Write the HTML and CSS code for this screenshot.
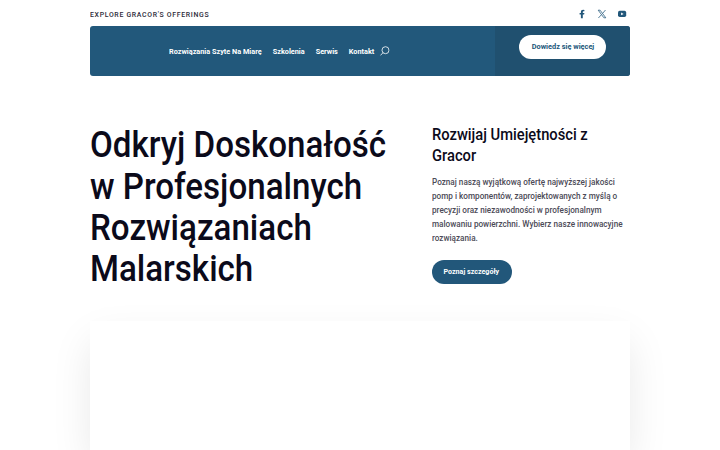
FILE: index.html
```
<!DOCTYPE html>
<html lang="pl">
<head>
<meta charset="utf-8">
<title>Gracor</title>
<link rel="stylesheet" href="styles.css">
</head>
<body>
<div class="page">
  <div class="topbar">
    <p class="tagline">EXPLORE GRACOR'S OFFERINGS</p>
    <div class="social">
      <svg viewBox="0 0 10 10"><path d="M3.9 9.2V5.6H2.6V4h1.3V3C3.9 1.5 4.8.8 6.1.8l1.3.1v1.4h-.8c-.6 0-.8.3-.8.8V4h1.6L7.1 5.6H5.8v3.6z" fill="#22577a"/></svg>
      <svg viewBox="0 0 10 10"><path d="M1.2 1.2h1.9l5.7 7.6H6.9zM8.5 1 5.6 4.4M4.4 5.7 1.4 9" fill="none" stroke="#22577a" stroke-width=".75"/></svg>
      <svg viewBox="0 0 10 10"><rect x="1" y="1.8" width="8.2" height="6.2" rx="1.7" fill="#22577a"/><path d="M4.1 3.5v2.8l2.5-1.4z" fill="#fff"/></svg>
    </div>
  </div>
  <header class="header">
    <nav class="nav">
      <div class="links">
        <a>Rozwiązania Szyte Na Miarę</a>
        <a>Szkolenia</a>
        <a>Serwis</a>
        <a>Kontakt</a>
        <svg class="search" viewBox="0 0 10 10" preserveAspectRatio="none"><circle cx="5.8" cy="4.2" r="3.5"/><path d="M3.4 6.6.8 9.4"/></svg>
      </div>
    </nav>
    <div class="cta"><a class="button button-light"><span>Dowiedz się więcej</span></a></div>
  </header>
  <main class="hero">
    <h1>Odkryj Doskonałość<br>w Profesjonalnych<br>Rozwiązaniach<br>Malarskich</h1>
    <section class="intro">
      <h2>Rozwijaj Umiejętności z<br>Gracor</h2>
      <p class="copy">Poznaj naszą wyjątkową ofertę najwyższej jakości<br>pomp i komponentów, zaprojektowanych z myślą o<br>precyzji oraz niezawodności w profesjonalnym<br>malowaniu powierzchni. Wybierz nasze innowacyjne<br>rozwiązania.</p>
      <a class="button button-dark"><span>Poznaj szczegóły</span></a>
    </section>
  </main>
  <div class="card"></div>
</div>
</body>
</html>
```
FILE: styles.css
```
* { box-sizing: border-box; }
body {
  margin: 0;
  height: 450px;
  overflow: hidden;
  background: #fff;
  color: #0b0a1a;
  font-family: Roboto, sans-serif;
}
h1, h2, p { margin: 0; }
.page {
  width: 540px;
  height: 450px;
  margin: 0 auto;
  display: flex;
  flex-direction: column;
}
.topbar {
  height: 26.4px;
  padding: 3px 3px 0 0;
  display: flex;
  align-items: center;
  justify-content: space-between;
}
/* Slightly narrowed text */
.tagline, .links, .button span, h1, h2, .copy {
  white-space: nowrap;
  transform-origin: 0 50%;
  transform: scaleX(.92);
}
.tagline {
  font-size: 7.5px;
  line-height: 12px;
  font-weight: 500;
  letter-spacing: .75px;
  color: #2b2a38;
}
.social { display: flex; gap: 10px; padding-bottom: 1px; }
.social svg { width: 10px; height: 10px; display: block; }
.header {
  height: 50px;
  display: grid;
  grid-template-columns: 405.4px 1fr;
  border-radius: 3px;
  overflow: hidden;
  background: #22587b;
}
.nav { padding-left: 79.2px; display: flex; }
.links {
  display: flex;
  align-items: center;
  gap: 12px;
  color: #fff;
  font-size: 8px;
  font-weight: 700;
  transform: scaleX(.912);
}
.search {
  width: 11px;
  height: 10px;
  margin-left: -6.5px;
  fill: none;
  stroke: #fff;
  stroke-width: .8;
}
.cta { background: #20506f; padding: 8.6px 0 0 24px; }
.button {
  height: 24px;
  display: flex;
  align-items: center;
  justify-content: center;
  border-radius: 12px;
  font-size: 8px;
  font-weight: 700;
}
.button span { transform-origin: 50% 50%; margin-top: -1px; }
.button-light { width: 87px; background: #fff; color: #22577a; }
.button-dark { width: 79.5px; margin-top: 14.5px; background: #22577a; color: #fff; }
.button-dark span { transform: scaleX(.89); }
.hero {
  height: 244.6px;
  padding-top: 47.6px;
  display: grid;
  grid-template-columns: 342px 1fr;
}
h1 {
  margin-top: 1.4px;
  font-size: 36px;
  line-height: 41.3px;
  font-weight: 500;
}
h2 {
  font-size: 16px;
  line-height: 21px;
  font-weight: 500;
}
.copy {
  margin-top: 9.5px;
  font-size: 9px;
  line-height: 14px;
  font-weight: 500;
  color: #4c4b57;
  transform: scaleX(.907);
}
.card {
  flex: 1;
  background: #fff;
  box-shadow: 0 18px 40px -3px rgba(0, 0, 0, .1);
}
```
